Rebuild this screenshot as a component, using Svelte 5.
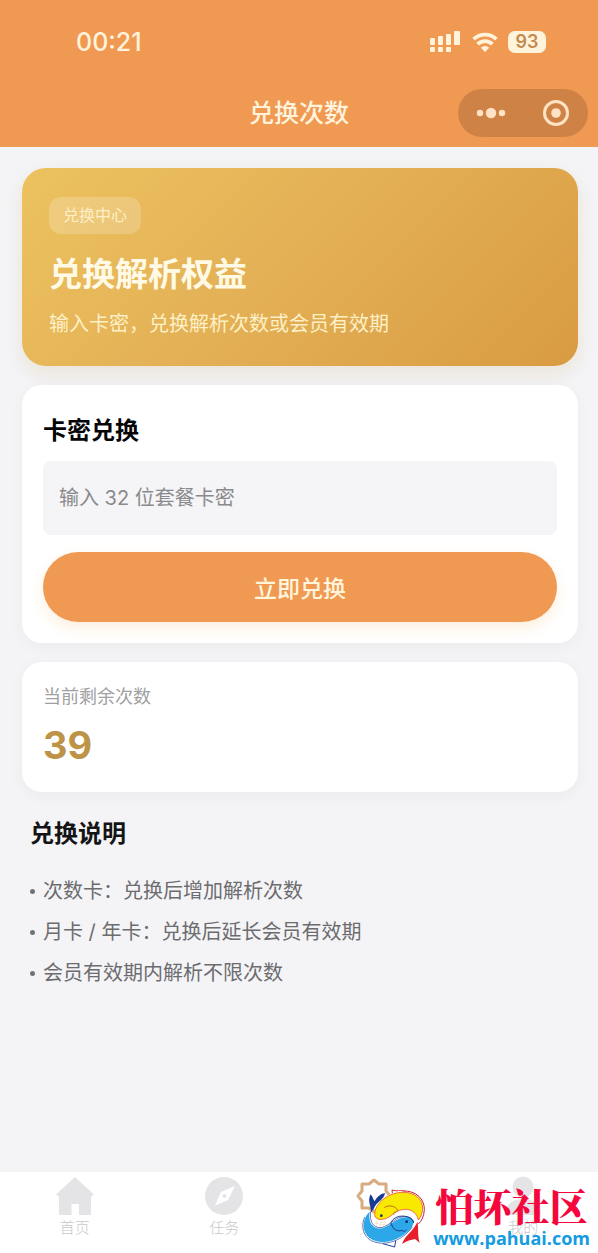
<script>
  let code = $state('');
  let remaining = 39;

  const notes = [
    '次数卡：兑换后增加解析次数',
    '月卡 / 年卡：兑换后延长会员有效期',
    '会员有效期内解析不限次数',
  ];

  const tabs = [
    { id: 'home', label: '首页' },
    { id: 'task', label: '任务' },
    { id: 'redeem', label: '兑换', active: true },
    { id: 'mine', label: '我的' },
  ];

  function submit(e) {
    e.preventDefault();
  }
</script>

<div class="page">
  <header>
    <div class="status-bar">
      <span class="time">00:21</span>
      <div class="indicators">
        <svg width="32" height="22" viewBox="0 0 32 22" fill="currentColor">
          <rect x="0" y="7" width="5" height="7" rx="1" />
          <rect x="8" y="5" width="5" height="9" rx="1" />
          <rect x="16" y="3" width="5" height="11" rx="1" />
          <rect x="24" y="0" width="6" height="14" rx="1" />
          <rect x="0" y="16" width="5" height="5" rx="1" />
          <rect x="8" y="16" width="5" height="5" rx="1" />
          <rect x="16" y="16" width="5" height="5" rx="1" />
        </svg>
        <svg width="26" height="20" viewBox="0 0 26 20" fill="none" stroke="currentColor" stroke-width="3.8">
          <path d="M1.6 7.2a16.3 16.3 0 0 1 22.8 0" />
          <path d="M5.6 12.2a10.5 10.5 0 0 1 14.800 0" />
          <path d="M13 20 8.8 15.800a6 6 0 0 1 8.4 0z" fill="currentColor" stroke="none" />
        </svg>
        <span class="battery">93</span>
      </div>
    </div>
    <div class="nav-bar">
      <h1>兑换次数</h1>
      <div class="capsule">
        <button aria-label="更多">
          <svg width="30" height="12" viewBox="0 0 30 12" fill="currentColor">
            <circle cx="4" cy="6" r="3.2" />
            <circle cx="15" cy="6" r="5.2" />
            <circle cx="26" cy="6" r="3.2" />
          </svg>
        </button>
        <button aria-label="关闭">
          <svg width="28" height="28" viewBox="0 0 28 28">
            <circle cx="14" cy="14" r="11.5" fill="none" stroke="currentColor" stroke-width="3" />
            <circle cx="14" cy="14" r="4.8" fill="currentColor" />
          </svg>
        </button>
      </div>
    </div>
  </header>

  <main>
    <section class="hero">
      <span class="badge">兑换中心</span>
      <h2>兑换解析权益</h2>
      <p>输入卡密，兑换解析次数或会员有效期</p>
    </section>

    <form class="card" onsubmit={submit}>
      <label for="code">卡密兑换</label>
      <input id="code" type="text" maxlength="32" placeholder="输入 32 位套餐卡密" bind:value={code} />
      <button class="submit" type="submit">立即兑换</button>
    </form>

    <section class="card balance">
      <p>当前剩余次数</p>
      <strong>{remaining}</strong>
    </section>

    <section class="notes">
      <h3>兑换说明</h3>
      <ul>
        {#each notes as note}
          <li>{note}</li>
        {/each}
      </ul>
    </section>
  </main>

  <nav class="tabs">
    {#each tabs as tab}
      <a href="#{tab.id}" class:active={tab.active}>
        <svg width="40" height="40" viewBox="0 0 40 40" fill="currentColor">
          {#if tab.id === 'home'}
            <path d="M20 1 39 18.500 36 20.500V39H24V28H16.500V39H4V20.500L1 18.500z" />
          {:else if tab.id === 'task'}
            <path fill-rule="evenodd" d="M20 1a19 19 0 1 0 0 38 19 19 0 0 0 0-38zM31 10 24 24 11 29.500 17 16z" />
            <circle cx="20.500" cy="20" r="2" />
          {:else if tab.id === 'redeem'}
            <path
              d="M20 4 25 8H32V15L36 20 32 25V32H25L20 36 15 32H8V25L4 20 8 15V8H15z"
              fill="none"
              stroke="currentColor"
              stroke-width="3"
              stroke-linejoin="round"
            />
          {:else}
            <circle cx="20" cy="11" r="10.500" />
            <path d="M2 39C2 29 9 23 20 23s18 6 18 16z" />
          {/if}
        </svg>
        <span>{tab.label}</span>
      </a>
    {/each}

    <div class="watermark">
      <svg width="75" height="78" viewBox="0 0 225 234" fill="none">
        <path d="M116 68 114 51C126 56 142 51 154 55" fill="#fff" stroke="#d3202c" stroke-width="3" />
        <path d="M86 212 122 222 125 203" fill="#fff" stroke="#23419a" stroke-width="3" />
        <path
          d="M62 127C58 94 98 57 145 54c42-2 67 25 66 56-1 20-8 34-18 43 1-25-13-42-36-42-27 0-36 23-60 31-18 6-33 1-35-15z"
          fill="#fff"
        />
        <path
          d="M62 125C61 94 99 60 142 58c40-2 65 20 64 50-1 12-5 24-13 33-4-19-18-32-39-32-28 0-39 21-59 28-17 5-32 2-33-12z"
          fill="#f9e900"
          stroke="#e5342a"
          stroke-width="2"
        />
        <path d="M145 54c42-2 67 25 66 56-1 20-8 34-18 43" stroke="#c61f32" stroke-width="3" />
        <path d="M91 104c13-10 34-5 40 8-5 8-14 3-12 13" stroke="#bd6c22" stroke-width="3" />
        <circle cx="82" cy="128" r="4" fill="#1b2c64" />
        <path
          d="M49 113C27 130 19 164 38 188c20 25 60 25 88 12 33-15 55-38 54-55-8-17-31-16-47-8-23 10-37 30-59 28-21-2-31-22-25-52z"
          fill="#2ca7e8"
          stroke="#fff"
          stroke-width="3"
        />
        <path d="M32 132c-10 25-6 48 10 64 24 21 63 17 88 4 20-10 36-24 45-39" stroke="#23419a" stroke-width="2" />
        <path d="M50 116c-4 30 8 48 28 48 19 0 35-20 55-29 18-8 40-5 46 12" stroke="#233b86" stroke-width="2" />
        <path d="M112 158c-5-12 8-25 25-28 20-3 40 4 42 20M114 155c2 14 16 22 29 17 7 5 11 3 14-2" stroke="#1d3b90" stroke-width="3" />
        <circle cx="158" cy="146" r="4" fill="#122768" />
        <path d="M50 119c4-15-12-35 0-55 6 7 7 15 12 21 7-13 16-22 31-25-2 21-25 24-34 48z" fill="#173a94" />
        <path d="M190 147c5 19-1 36 7 62l-14-11c-12 3-24 5-39 15 11-29 30-33 46-66z" fill="#e61f2b" />
      </svg>
      <div class="site">
        <b>怕坏社区</b>
        <span>www.pahuai.com</span>
      </div>
    </div>
  </nav>
</div>

<style>
  :global(body) {
    margin: 0;
    background: #f4f4f7;
  }

  .page {
    display: flex;
    flex-direction: column;
    min-height: 100vh;
    font-family: Inter, "Noto Sans CJK SC", sans-serif;
    color: #141416;
  }

  h1, h2, h3, p, ul {
    margin: 0;
    padding: 0;
  }

  button {
    border: none;
    padding: 0;
    background: none;
    font-family: inherit;
    color: inherit;
  }

  header {
    background: #f09953;
    color: #fff3dc;
  }

  .status-bar {
    display: flex;
    justify-content: space-between;
    align-items: center;
    height: 84px;
    padding: 0 52px 0 76px;
  }

  .time {
    font-size: 25px;
    font-weight: 500;
  }

  .indicators {
    display: flex;
    align-items: center;
    gap: 10px;
  }

  .battery {
    width: 38px;
    border-radius: 7px;
    background: #fff3dc;
    color: #c58a4e;
    font-size: 18px;
    font-weight: 600;
    line-height: 22px;
    text-align: center;
  }

  .nav-bar {
    display: grid;
    grid-template-columns: 1fr auto 1fr;
    align-items: center;
    height: 63px;
    padding: 0 10px 6px;
    box-sizing: border-box;
  }

  h1 {
    grid-column: 2;
    font-size: 25px;
    font-weight: 500;
    line-height: 36px;
  }

  .capsule {
    display: flex;
    justify-self: end;
    width: 130px;
    height: 48px;
    border-radius: 24px;
    background: #cf8246;
    color: #ffe3c4;
  }

  .capsule button {
    display: flex;
    flex: 1;
    align-items: center;
    justify-content: center;
  }

  main {
    display: flex;
    flex: 1;
    flex-direction: column;
    gap: 19px;
    padding: 21px 20px 24px 22px;
  }

  .hero {
    display: flex;
    flex-direction: column;
    align-items: flex-start;
    padding: 29px 27px 27px;
    border-radius: 24px;
    background: linear-gradient(135deg, #ecc25f 0%, #e4b156 45%, #d99b42 100%);
    box-shadow: 0 8px 20px rgba(200, 165, 90, 0.2);
    color: #fffae6;
  }

  .badge {
    padding: 0 14px;
    border-radius: 12px;
    background: rgba(255, 255, 255, 0.2);
    color: #fdefc4;
    font-size: 16px;
    line-height: 37px;
  }

  h2 {
    margin-top: 16px;
    font-size: 33px;
    font-weight: 700;
    line-height: 48px;
  }

  .hero p {
    margin-top: 11px;
    color: #fdf0c6;
    font-size: 20px;
    line-height: 30px;
  }

  .card {
    padding: 21px;
    border-radius: 20px;
    background: #fff;
    box-shadow: 0 4px 16px rgba(0, 0, 0, 0.04);
  }

  form {
    display: flex;
    flex-direction: column;
  }

  label,
  h3 {
    font-size: 24px;
    font-weight: 700;
    line-height: 36px;
  }

  label {
    padding: 7px 0 12px;
    color: #060606;
  }

  input {
    height: 74px;
    padding: 0 16px;
    border: none;
    border-radius: 8px;
    background: #f5f4f6;
    font-family: inherit;
    font-size: 20px;
  }

  input::placeholder {
    color: #8a8a8c;
    opacity: 1;
  }

  .submit {
    height: 70px;
    margin-top: 17px;
    border-radius: 35px;
    background: #f09953;
    box-shadow: 0 6px 14px rgba(240, 180, 100, 0.22);
    color: #fff5dc;
    font-size: 23px;
    font-weight: 500;
  }

  .balance p {
    color: #a0a0a2;
    font-size: 18px;
    line-height: 28px;
  }

  .balance strong {
    display: block;
    margin-top: 8px;
    color: #bd9447;
    font-size: 38px;
    font-weight: 700;
    line-height: 52px;
  }

  .notes {
    padding: 5px 8px 0;
  }

  ul {
    margin-top: 19px;
    list-style: none;
  }

  li {
    display: flex;
    align-items: center;
    gap: 8px;
    color: #6c6c6f;
    font-size: 20px;
    line-height: 41px;
    white-space: pre-wrap;
  }

  li::before {
    content: "";
    width: 5px;
    height: 5px;
    border-radius: 50%;
    background: #727275;
  }

  .tabs {
    position: relative;
    display: grid;
    grid-template-columns: repeat(4, 1fr);
    height: 81px;
    background: #fff;
  }

  .tabs a {
    display: flex;
    flex-direction: column;
    align-items: center;
    gap: 2px;
    padding-top: 4px;
    color: #e4e4e6;
    font-size: 15px;
    font-weight: 300;
    line-height: 20px;
    text-decoration: none;
  }

  .tabs a span {
    color: #c9c9cc;
  }

  .tabs a.active {
    color: #d9ab80;
  }

  .tabs a.active span {
    color: #f3dfc8;
  }

  .watermark {
    position: absolute;
    right: 8px;
    bottom: 2px;
    display: flex;
    align-items: flex-end;
    gap: 4px;
    pointer-events: none;
  }

  .site {
    display: flex;
    flex-direction: column;
    align-items: center;
    color: #f5063c;
  }

  .site b {
    font-family: "Noto Serif CJK SC", "Noto Sans CJK SC", serif;
    font-size: 38px;
    font-weight: 900;
    line-height: 40px;
  }

  .site span {
    color: #149be0;
    font-family: "Open Sans", sans-serif;
    font-size: 18px;
    font-weight: 700;
    line-height: 26px;
  }
</style>
